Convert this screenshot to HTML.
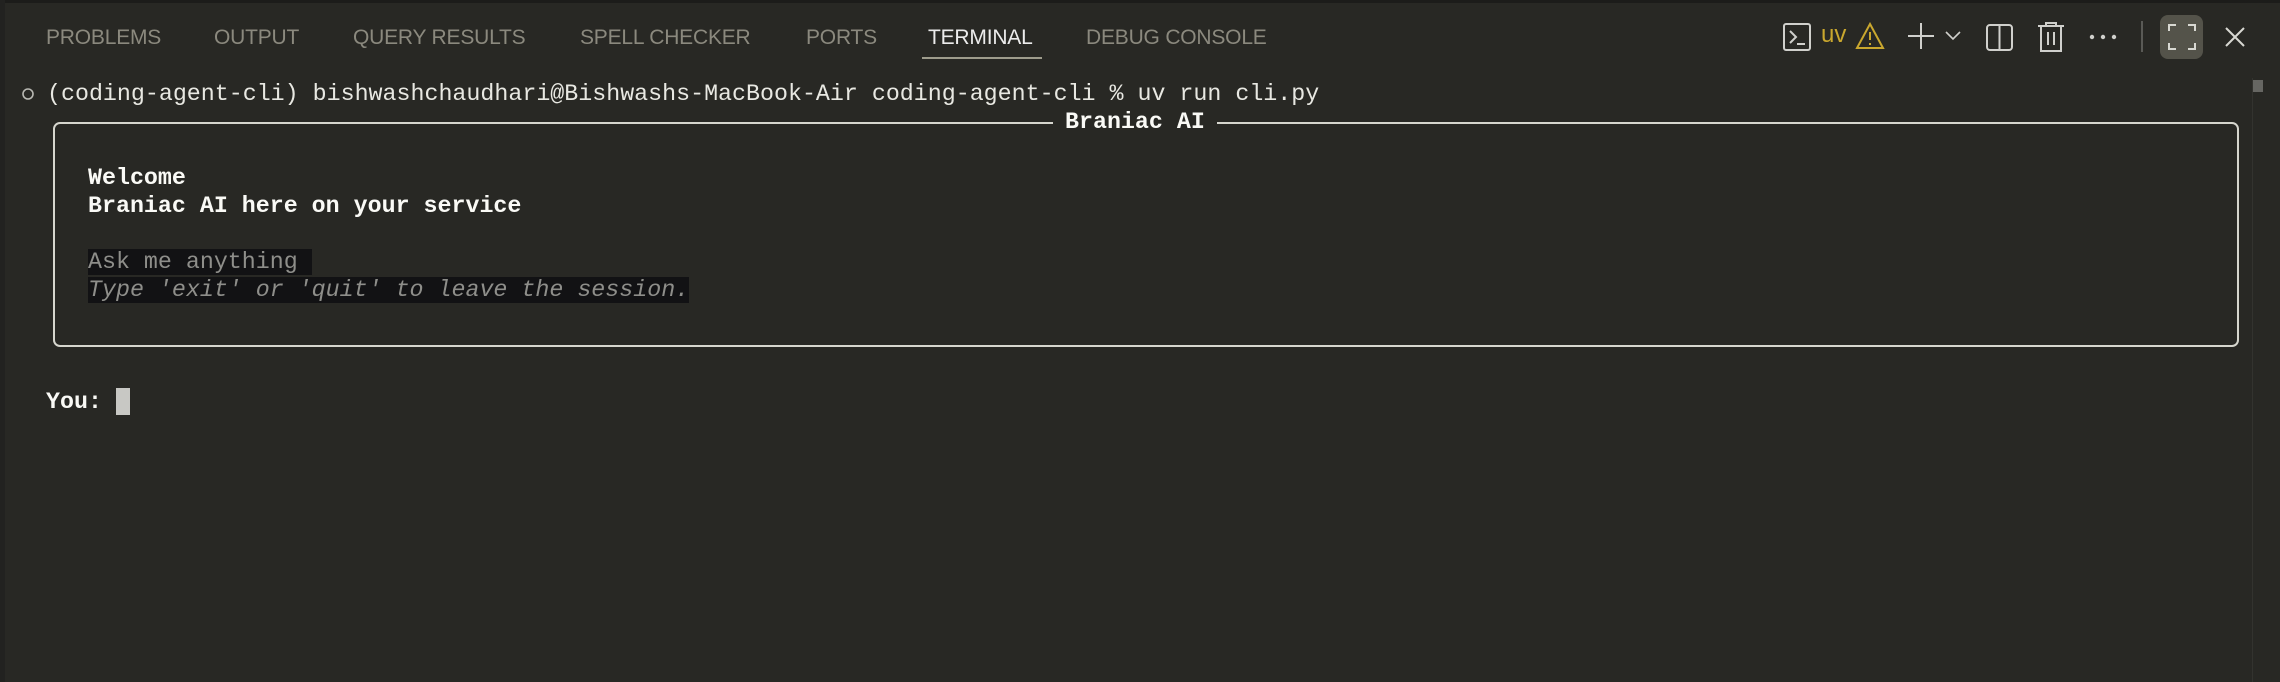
<!DOCTYPE html>
<html><head><meta charset="utf-8"><style>
*{margin:0;padding:0;box-sizing:border-box}
html,body{width:2280px;height:682px;overflow:hidden;background:#282824}
body{position:relative;font-family:"Liberation Sans",sans-serif}
.topline{position:absolute;left:0;top:0;width:2280px;height:3px;background:#1c1c1a}
.leftline{position:absolute;left:0;top:0;width:5px;height:682px;background:#222220}
.tab{position:absolute;top:26px;font-size:21px;color:#8b897e;letter-spacing:-0.2px;white-space:nowrap}
.act{color:#ececec}
.ul{position:absolute;left:922px;top:57px;width:120px;height:2px;background:#9e9c8c}
.mono{position:absolute;font-family:"Liberation Mono",monospace;font-size:23.3px;line-height:28px;white-space:pre;color:#e8e8e2}
.b{font-weight:bold;color:#fafaf6}
.hl{background:#121214;color:#8e8e8a}
.box{position:absolute;left:53px;top:122px;width:2186px;height:225px;border:2px solid #d6d6ce;border-radius:7px}
.title{position:absolute;left:1053px;top:108px;background:#282824;padding:0 12px}
svg{position:absolute}
</style></head><body>
<div class="topline"></div><div class="leftline"></div>
<div class="tab" style="left:46px">PROBLEMS</div>
<div class="tab" style="left:214px">OUTPUT</div>
<div class="tab" style="left:353px">QUERY RESULTS</div>
<div class="tab" style="left:580px">SPELL CHECKER</div>
<div class="tab" style="left:806px">PORTS</div>
<div class="tab act" style="left:928px">TERMINAL</div>
<div class="tab" style="left:1086px">DEBUG CONSOLE</div>
<div class="ul"></div>

<svg style="left:1782px;top:22px" width="30" height="30" viewBox="0 0 30 30" fill="none" stroke="#d0d0cc" stroke-width="2"><rect x="2" y="2" width="26" height="26" rx="2"/><path d="M8 9l6 6-6 6M15 22h8"/></svg>
<div style="position:absolute;left:1821px;top:21px;font-size:24px;color:#c9a72e">uv</div>
<svg style="left:1855px;top:22px" width="30" height="28" viewBox="0 0 30 28" fill="none" stroke="#c9a72e" stroke-width="2"><path d="M15 2L28 26H2Z"/><path d="M15 10v8M15 21v2"/></svg>
<svg style="left:1907px;top:22px" width="28" height="28" viewBox="0 0 28 28" stroke="#d0d0cc" stroke-width="2"><path d="M14 1v26M1 14h26"/></svg>
<svg style="left:1945px;top:31px" width="16" height="10" viewBox="0 0 16 10" fill="none" stroke="#d0d0cc" stroke-width="1.6"><path d="M1 1l7 7 7-7"/></svg>
<svg style="left:1985px;top:23px" width="30" height="30" viewBox="0 0 30 30" fill="none" stroke="#d0d0cc" stroke-width="2"><rect x="2" y="2" width="25" height="25" rx="3"/><path d="M14.5 2v25"/></svg>
<svg style="left:2036px;top:21px" width="30" height="32" viewBox="0 0 30 32" fill="none" stroke="#d0d0cc" stroke-width="2"><path d="M2 5h26M10 5V2h10v3M5 5v25h20V5M12 11v13M18 11v13"/></svg>
<svg style="left:2088px;top:33px" width="30" height="8" viewBox="0 0 30 8" fill="#d0d0cc"><circle cx="4" cy="4" r="2.2"/><circle cx="15" cy="4" r="2.2"/><circle cx="26" cy="4" r="2.2"/></svg>
<div style="position:absolute;left:2141px;top:21px;width:2px;height:31px;background:#5a5a56"></div>
<div style="position:absolute;left:2160px;top:15px;width:43px;height:44px;border-radius:8px;background:#54534a"></div>
<svg style="left:2167px;top:23px" width="30" height="28" viewBox="0 0 30 28" fill="none" stroke="#d8d8d2" stroke-width="2"><path d="M2 8V2h7M21 2h7v6M28 20v6h-7M9 26H2v-6"/></svg>
<svg style="left:2224px;top:26px" width="22" height="22" viewBox="0 0 22 22" stroke="#d8d8d2" stroke-width="2"><path d="M2 2l18 18M20 2L2 20"/></svg>

<div style="position:absolute;left:2252px;top:78px;width:1px;height:604px;background:#33332f"></div>
<div style="position:absolute;left:2253px;top:80px;width:10px;height:12px;background:#666662"></div>

<svg style="left:21px;top:87px" width="14" height="14" viewBox="0 0 14 14" fill="none" stroke="#b8b8b2" stroke-width="1.6"><circle cx="7" cy="7" r="5"/></svg>
<div class="mono" style="left:47px;top:80px">(coding-agent-cli) bishwashchaudhari@Bishwashs-MacBook-Air coding-agent-cli % uv run cli.py</div>
<div class="box"></div>
<div class="mono b title">Braniac AI</div>
<div class="mono b" style="left:88px;top:164px">Welcome
Braniac AI here on your service</div>
<div class="mono" style="left:88px;top:248px"><span class="hl">Ask me anything </span>
<span class="hl" style="font-style:italic">Type 'exit' or 'quit' to leave the session.</span></div>
<div class="mono b" style="left:46px;top:388px">You:</div>
<div style="position:absolute;left:116px;top:388px;width:14px;height:27px;background:#c8c8c4"></div>
</body></html>
